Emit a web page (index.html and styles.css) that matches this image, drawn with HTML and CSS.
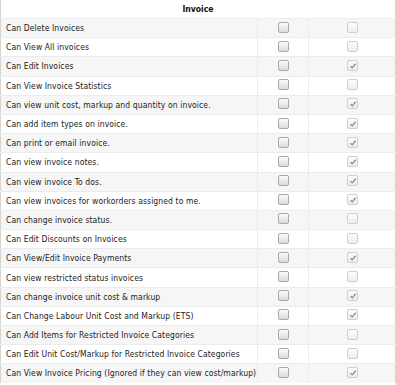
FILE: index.html
```html
<!DOCTYPE html>
<html lang="en">
<head>
    <meta charset="UTF-8">
    <title>Invoice Permissions</title>
    <link rel="stylesheet" href="styles.css">
</head>
<body>
    <table class="perm-table">
        <colgroup>
            <col class="col-label">
            <col class="col-first">
            <col class="col-second">
        </colgroup>
        <thead>
            <tr>
                <th colspan="3">Invoice</th>
            </tr>
        </thead>
        <tbody id="rows"></tbody>
    </table>

    <script>
        // permission name, second column ticked?
        const perms = [
            ["Can Delete Invoices", false],
            ["Can View All invoices", false],
            ["Can Edit Invoices", true],
            ["Can View Invoice Statistics", false],
            ["Can view unit cost, markup and quantity on invoice.", true],
            ["Can add item types on invoice.", true],
            ["Can print or email invoice.", true],
            ["Can view invoice notes.", true],
            ["Can view invoice To dos.", true],
            ["Can view invoices for workorders assigned to me.", true],
            ["Can change invoice status.", false],
            ["Can Edit Discounts on Invoices", false],
            ["Can View/Edit Invoice Payments", true],
            ["Can view restricted status invoices", false],
            ["Can change invoice unit cost & markup", true],
            ["Can Change Labour Unit Cost and Markup (ETS)", true],
            ["Can Add Items for Restricted Invoice Categories", false],
            ["Can Edit Unit Cost/Markup for Restricted Invoice Categories", false],
            ["Can View Invoice Pricing (Ignored if they can view cost/markup)", true]
        ];

        const tick = '<svg viewBox="0 0 10 10" width="8" height="8"><path d="M1.8 5.2 L4 7.4 L8.4 2.2" fill="none" stroke="#8a8a8a" stroke-width="1.6"/></svg>';

        const body = document.getElementById('rows');
        perms.forEach(p => {
            const tr = document.createElement('tr');
            tr.innerHTML =
                '<td class="label">' + p[0] + '</td>' +
                '<td class="cell"><span class="box"></span></td>' +
                '<td class="cell"><span class="box disabled">' + (p[1] ? tick : '') + '</span></td>';
            body.appendChild(tr);
        });
    </script>
</body>
</html>
```

FILE: styles.css
```css
body {
    margin: 0;
    background-color: #ffffff;
    font-family: "DejaVu Sans Condensed", "DejaVu Sans", sans-serif;
    font-stretch: condensed;
    color: #222;
}
.perm-table {
    width: 395px;
    table-layout: fixed;
    border-collapse: collapse;
    border-left: 1px solid #d4d4d4;
    border-right: 1px solid #d4d4d4;
    font-size: 8.5px;
}
.col-label {
    width: 257px;
}
.col-first {
    width: 51px;
}
.col-second {
    width: 87px;
}
.perm-table th {
    height: 18px;
    padding: 0;
    font-weight: bold;
    text-align: center;
    font-size: 8.6px;
    color: #111;
}
.perm-table td {
    height: 18.2px;
    padding: 0 0 0 5px;
    border-top: 1px solid #ececec;
}
.perm-table tbody tr:nth-child(odd) {
    background-color: #f6f6f6;
}
.perm-table td.cell {
    padding: 0;
    text-align: center;
    border-left: 1px solid #ececec;
}
.perm-table td.label {
    white-space: nowrap;
    overflow: hidden;
    letter-spacing: 0.1px;
}
.box {
    display: inline-block;
    box-sizing: border-box;
    width: 11px;
    height: 11px;
    vertical-align: middle;
    border: 1px solid #a9a9a9;
    border-radius: 2px;
    background: linear-gradient(#fbfbfb, #dcdcdc);
    position: relative;
    top: -1px;
}
.box.disabled {
    border-color: #cfcfcf;
    background: linear-gradient(#fdfdfd, #ededed);
}
.box svg {
    display: block;
    margin: 1px 0 0 1px;
}
```
